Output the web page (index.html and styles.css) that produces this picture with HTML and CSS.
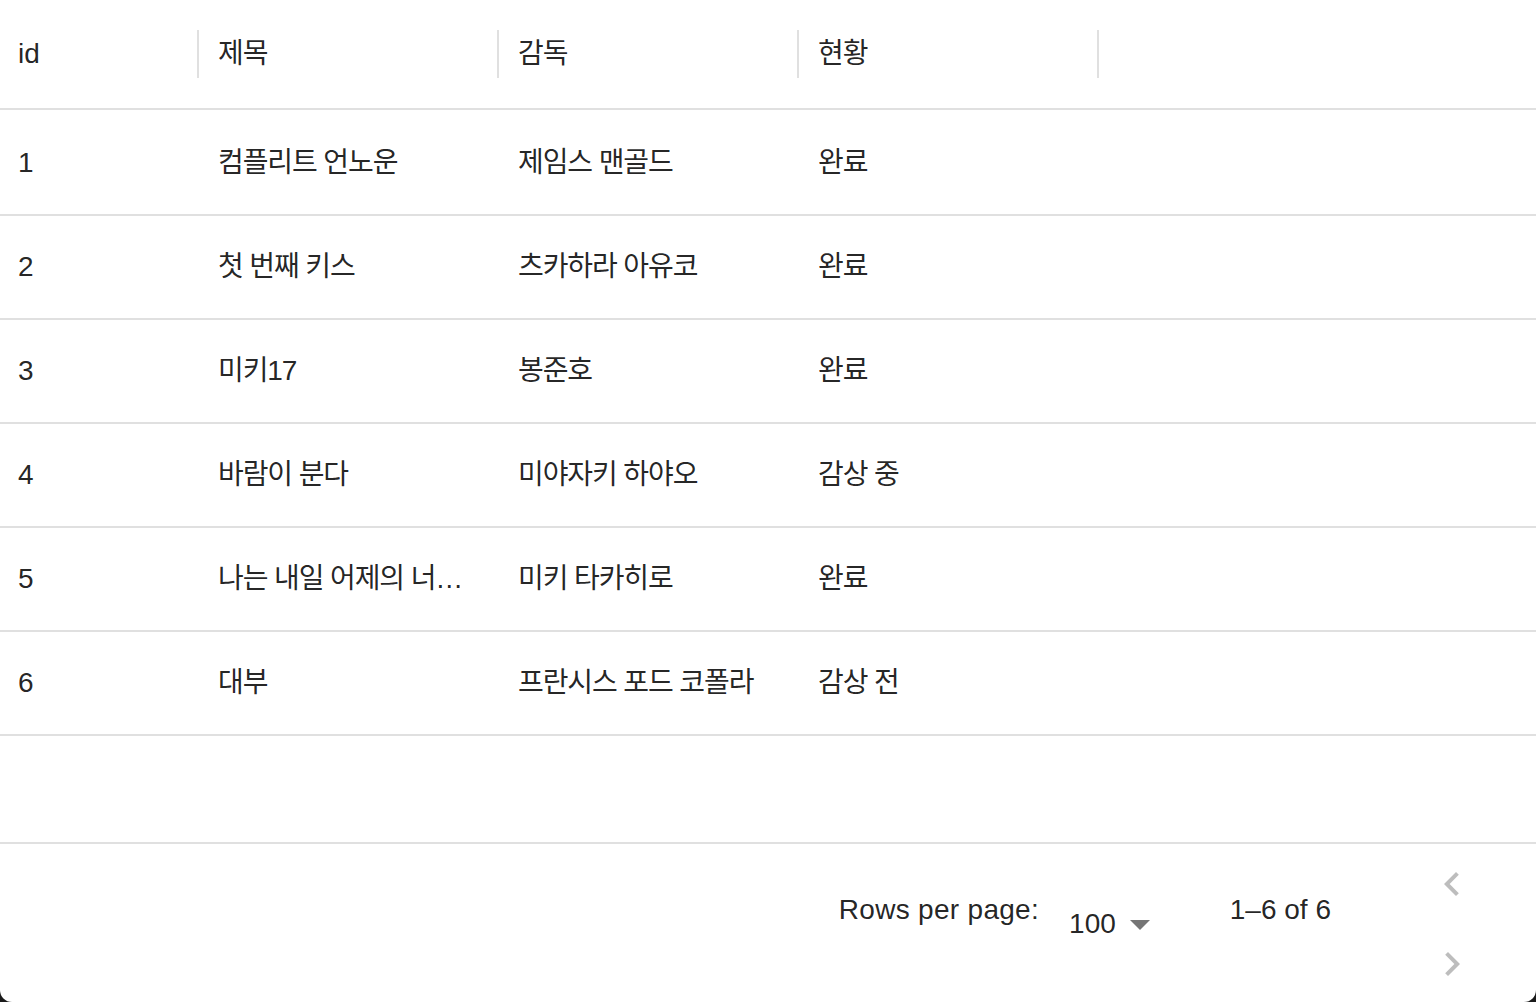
FILE: index.html
```html
<!DOCTYPE html>
<html lang="ko">
<head>
<meta charset="utf-8">
<title>Movies</title>
<link rel="stylesheet" href="styles.css">
</head>
<body>
<div class="grid">
  <div class="header">
    <div class="hcell c-id"><span class="htitle">id</span><span class="sep"></span></div>
    <div class="hcell c-w"><span class="htitle ko">제목</span><span class="sep"></span></div>
    <div class="hcell c-w"><span class="htitle ko">감독</span><span class="sep"></span></div>
    <div class="hcell c-w"><span class="htitle ko">현황</span><span class="sep"></span></div>
  </div>
  <div class="rows">
    <div class="row"><div class="cell c-id">1</div><div class="cell c-w ko">컴플리트 언노운</div><div class="cell c-w ko">제임스 맨골드</div><div class="cell c-w ko">완료</div></div>
    <div class="row"><div class="cell c-id">2</div><div class="cell c-w ko">첫 번째 키스</div><div class="cell c-w ko">츠카하라 아유코</div><div class="cell c-w ko">완료</div></div>
    <div class="row"><div class="cell c-id">3</div><div class="cell c-w ko">미키17</div><div class="cell c-w ko">봉준호</div><div class="cell c-w ko">완료</div></div>
    <div class="row"><div class="cell c-id">4</div><div class="cell c-w ko">바람이 분다</div><div class="cell c-w ko">미야자키 하야오</div><div class="cell c-w ko">감상 중</div></div>
    <div class="row"><div class="cell c-id">5</div><div class="cell c-w ko">나는 내일 어제의 너…</div><div class="cell c-w ko">미키 타카히로</div><div class="cell c-w ko">완료</div></div>
    <div class="row"><div class="cell c-id">6</div><div class="cell c-w ko">대부</div><div class="cell c-w ko">프란시스 포드 코폴라</div><div class="cell c-w ko">감상 전</div></div>
  </div>
  <div class="filler"></div>
  <div class="footer">
    <span class="plabel plabel-wide">Rows per page:</span>
    <div class="select">
      <span class="select-value">100</span>
      <svg class="select-icon" viewBox="0 0 24 24" width="48" height="48"><path d="M7 10l5 5 5-5z"/></svg>
    </div>
    <span class="plabel">1–6 of 6</span>
    <div class="actions">
      <button class="ibtn" disabled><svg viewBox="0 0 24 24" width="48" height="48"><path d="M15.41 16.59 10.83 12l4.58-4.59L14 6l-6 6 6 6 1.41-1.41z"/></svg></button>
      <button class="ibtn" disabled><svg viewBox="0 0 24 24" width="48" height="48"><path d="M8.59 16.59 13.17 12 8.59 7.41 10 6l6 6-6 6-1.41-1.41z"/></svg></button>
    </div>
  </div>
</div>
</body>
</html>
```

FILE: styles.css
```css
html {
  background: #1a1a1a;
  height: 100%;
}
body {
  margin: 0;
  height: 100%;
  font-family: "Liberation Sans", "Noto Sans CJK KR", sans-serif;
  font-size: 28px;
  color: rgba(0, 0, 0, 0.87);
}
.grid {
  background: #fff;
  height: 1002px;
  display: flex;
  flex-direction: column;
  border-bottom-left-radius: 12px;
  border-bottom-right-radius: 12px;
  overflow: hidden;
}
.header {
  height: 110px;
  box-sizing: border-box;
  border-bottom: 2px solid #e0e0e0;
  display: flex;
  flex: none;
}
.hcell {
  display: flex;
  align-items: center;
  padding-left: 18px;
  box-sizing: border-box;
  height: 108px;
}
.c-id { width: 200px; flex: none; }
.c-w { width: 300px; flex: none; }
.htitle {
  flex: 1;
  line-height: 1.43;
  white-space: nowrap;
}
.sep {
  width: 2px;
  height: 48px;
  margin-right: 1px;
  background: #e0e0e0;
  flex: none;
}
.ko {
  font-family: "Liberation Sans", "Noto Sans CJK KR", sans-serif;
  letter-spacing: -1.1px;
}
.rows {
  flex: none;
  padding-top: 2px;
}
.row {
  height: 104px;
  box-sizing: border-box;
  border-bottom: 2px solid #e0e0e0;
  display: flex;
  align-items: center;
}
.cell {
  padding: 0 10px 0 18px;
  box-sizing: border-box;
  white-space: nowrap;
  overflow: hidden;
  text-overflow: ellipsis;
  line-height: 1.43;
}
.filler {
  height: 108px;
  flex: none;
  border-bottom: 2px solid #e0e0e0;
  box-sizing: border-box;
}
.footer {
  flex: 1;
  display: flex;
  align-items: center;
  justify-content: flex-end;
  padding-right: 44px;
}
.plabel {
  line-height: 40px;
  margin-bottom: 28px;
  white-space: nowrap;
}
.plabel-wide {
  letter-spacing: 0.3px;
}
.select {
  position: relative;
  margin: 0 66px 0 14px;
  padding: 0 48px 0 16px;
  line-height: 46px;
}
.select-icon {
  position: absolute;
  right: 0;
  top: 50%;
  transform: translateY(-50%);
  fill: rgba(0, 0, 0, 0.54);
}
.actions {
  display: flex;
  flex-direction: column;
  margin-left: 81px;
}
.ibtn {
  width: 80px;
  height: 80px;
  padding: 16px;
  border: 0;
  background: transparent;
  display: flex;
  align-items: center;
  justify-content: center;
}
.ibtn svg {
  fill: rgba(0, 0, 0, 0.26);
  flex: none;
}
```
